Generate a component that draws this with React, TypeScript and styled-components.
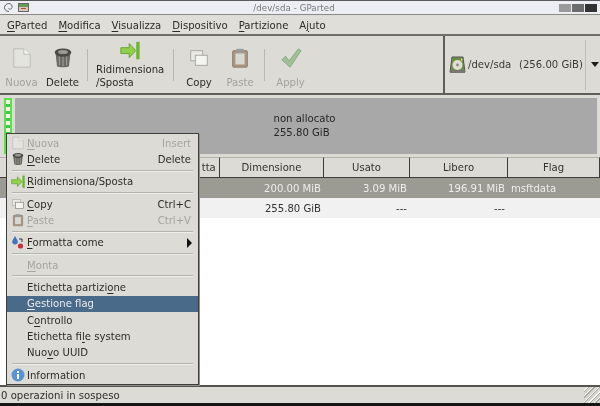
import React from "react";
import styled, { createGlobalStyle } from "styled-components";

const Global = createGlobalStyle`
  html, body { margin: 0; padding: 0; background: #dcdbd5; }
  *, *::before, *::after { box-sizing: border-box; }
  body { width: 600px; height: 406px; overflow: hidden; font-family: "DejaVu Sans", sans-serif; font-size: 10.1px; color: #2b2b2b; }
  svg { display: block; flex: none; }
`;

const Win = styled.div`
  position: relative; width: 600px; height: 406px; display: flex; flex-direction: column;
  background: #dcdbd5; overflow: hidden; white-space: nowrap; filter: blur(.3px);
`;
const TitleBar = styled.div`
  height: 15px; flex: none; border-top: 1px solid #5a5a5a; border-bottom: 1px solid #8a8a86;
  background: #eceef4; display: flex; align-items: center; padding: 0 3px; gap: 4px;
`;
const TitleText = styled.div`
  flex: 1; text-align: center; font-size: 8.6px; color: #77777a; letter-spacing: .1px;
`;
const WinBtns = styled.div` display: flex; gap: 1px; `;
const WinBtn = styled.span<{ $c: string }>`
  width: 12px; height: 8px; background: ${p => p.$c}; display: block;
`;
const MenuBar = styled.div`
  height: 20px; flex: none; display: flex; align-items: center; padding: 0 0 0 7px; gap: 11px;
  border-bottom: 2px solid #6e6e6a; background: #dfded8; margin-top: 1px;
`;
const U = styled.span` text-decoration: underline; text-underline-offset: 1.5px; text-decoration-thickness: 1px; `;

const ToolRow = styled.div`
  height: 59px; flex: none; display: flex; border-bottom: 2px solid #5e5e5a; background: #dcdbd5;
`;
const Tools = styled.div`
  flex: 1; display: flex; align-items: stretch; padding: 0 0 0 5px;
`;
const Tool = styled.div<{ $w: number; $off?: boolean }>`
  width: ${p => p.$w}px; display: flex; flex-direction: column; align-items: center; justify-content: flex-end;
  padding-bottom: 4px; gap: 8px; color: ${p => (p.$off ? "#a3a39e" : "#2b2b2b")}; flex: none; line-height: 12px;
`;
const WideTool = styled.div`
  width: 76px; flex: none; display: flex; flex-direction: column; align-items: center; padding-top: 5px; gap: 1.5px;
`;
const WideLabel = styled.div` line-height: 13px; width: 68px; `;
const ToolSep = styled.div<{ $l: number; $r: number }>`
  width: 1px; background: #b9b8b2; margin: 13px ${p => p.$r}px 12px ${p => p.$l}px; flex: none;
`;
const DeviceBox = styled.div`
  width: 157px; flex: none; border-left: 2px solid #5e5e5a; display: flex; align-items: center; padding-left: 4px; gap: 2px;
  color: #3a3a3a;
`;
const DevName = styled.span` width: 49px; flex: none; `;
const DevSize = styled.span` width: 64px; flex: none; `;
const DevSep = styled.span` width: 1px; height: 50px; background: #bdbcb6; flex: none; `;
const Arrow = styled.span`
  width: 0; height: 0; border-left: 4px solid transparent; border-right: 4px solid transparent;
  border-top: 5px solid #1d1d1d; margin-left: 3px;
`;

const Graph = styled.div`
  height: 62px; flex: none; padding: 3px 3px 3px 4px; display: flex; gap: 3px; background: #dcdbd5;
`;
const PartSlim = styled.div`
  width: 8px; flex: none; border: 2px solid #5ee04a; background: repeating-linear-gradient(to bottom, #eef7e0 0 4px, #3fc94a 4px 7px);
`;
const Unalloc = styled.div`
  flex: 1; background: #a8a8a8; display: flex; flex-direction: column; align-items: center; justify-content: center;
  line-height: 14px; color: #262626; padding-right: 6px;
`;
const UnallocInner = styled.div` width: 59px; `;

const Table = styled.div`
  flex: 1; background: #fff; display: flex; flex-direction: column; min-height: 0;
`;
const Row = styled.div`
  display: grid; grid-template-columns: 220px 104px 86px 98px 92px;
`;
const HeadCell = styled.div<{ $end?: boolean }>`
  height: 21px; display: flex; align-items: center; justify-content: ${p => (p.$end ? "flex-end" : "center")};
  background: #dcdbd5; border-right: 1px solid #3d3d3d; border-bottom: 1px solid #3d3d3d; border-top: 1px solid #b2b1ab;
  color: #333;
`;
const DataRow = styled(Row)<{ $sel?: boolean }>`
  height: 20px; align-items: center; background: ${p => (p.$sel ? "#9b9a93" : "#f1f1f1")};
  color: ${p => (p.$sel ? "#eeeee8" : "#333")};
`;
const Num = styled.div` text-align: right; padding-right: 3px; `;
const Flag = styled.div` padding-left: 3px; `;

const Status = styled.div`
  height: 18px; flex: none; border-top: 2px solid #55554f; background: #dcdbd5; display: flex; align-items: center;
  padding-left: 1px; color: #2e2e2e; position: relative;
`;
const Grip = styled.div`
  position: absolute; right: 0; top: 0; bottom: 0; width: 16px;
  background: repeating-linear-gradient(135deg, #d5d4ce 0 2px, #f4f4f0 2px 3px, #a9a8a2 3px 4px);
`;
const BottomEdge = styled.div` height: 3px; background: #161616; flex: none; `;

const Menu = styled.div`
  position: absolute; left: 6px; top: 133px; width: 193px; height: 252px; background: #dcdbd5;
  border: 1px solid #3e3e3c; box-shadow: 1px 1px 0 #8f8e8a; padding: 1px 0 0; display: flex; flex-direction: column;
  color: #2c2c2c;
`;
const Item = styled.div<{ $off?: boolean; $hi?: boolean }>`
  height: 16.4px; flex: none; display: flex; align-items: center; padding: 0 7px 0 20px; position: relative;
  color: ${p => (p.$hi ? "#e9edf0" : p.$off ? "#a5a5a0" : "#2c2c2c")};
  background: ${p => (p.$hi ? "#4a6a8a" : "transparent")};
`;
const ItemIcon = styled.span` position: absolute; left: 4px; top: 1px; width: 14px; height: 14px; display: block; `;
const Short = styled.span` margin-left: auto; `;
const Sub = styled.span`
  margin-left: auto; margin-right: -1px; width: 0; height: 0; border-top: 5px solid transparent; border-bottom: 5px solid transparent; border-left: 5px solid #111;
`;
const Sep = styled.div`
  height: 2px; flex: none; background: #b4b3ad; border-bottom: 1px solid #eeeeea; margin: 1.95px 5px;
`;

const Page = ({ s = 22 }: { s?: number }) => (
  <svg width={s} height={s} viewBox="0 0 24 24">
    <path d="M3 2h11l7 6v14H3z" fill="#e4e4df" stroke="#b9b9b4" />
    <path d="M14 2v6h7" fill="#f2f2ee" stroke="#bcbcb7" />
  </svg>
);
const Trash = ({ s = 22 }: { s?: number }) => (
  <svg width={s} height={s} viewBox="0 0 24 24">
    <path d="M4 8l1.5 13c1 1.6 12 1.6 13 0L20 8z" fill="#6a6a63" />
    <path d="M8 10v10M12 10v11M16 10v10" stroke="#a8a8a0" />
    <ellipse cx="12" cy="6" rx="9" ry="4.500" fill="#4a4a45" />
    <ellipse cx="12" cy="5.500" rx="5.500" ry="2.200" fill="#9a9a92" />
  </svg>
);
const Resize = ({ s = 20 }: { s?: number }) => (
  <svg width={s} height={s} viewBox="0 0 24 24">
    <path d="M1 8h10V3l8 8.500-8 8.500v-5H1z" fill="#8fd14a" stroke="#5e9b2a" />
    <rect x="19.500" y="1" width="4" height="21" fill="#6cb52f" />
  </svg>
);
const Copy = ({ s = 22, off = false }: { s?: number; off?: boolean }) => (
  <svg width={s} height={s} viewBox="0 0 24 24">
    <rect x="3" y="4" width="13" height="11" fill="#e9e9e5" stroke="#a8a8a3" />
    <rect x="8" y="9" width="13" height="11" fill="#f4f4f0" stroke={off ? "#a4a49f" : "#77776f"} />
  </svg>
);
const Paste = ({ s = 22 }: { s?: number }) => (
  <svg width={s} height={s} viewBox="0 0 24 24">
    <rect x="4" y="4" width="16" height="18" rx="1" fill="#a89684" stroke="#8a7a6a" />
    <rect x="8" y="2" width="8" height="4" fill="#9a9a96" />
    <rect x="7" y="7" width="10" height="12" fill="#d8d8d2" />
  </svg>
);
const Check = () => (
  <svg width={22} height={22} viewBox="0 0 24 24">
    <path d="M2 14l4-4 4 5L20 2l3 2-12 18z" fill="#9fbf94" stroke="#8aa882" />
  </svg>
);
const Disk = () => (
  <svg width={17} height={18} viewBox="0 0 17 18">
    <path d="M3 1h11l2 15H1z" fill="#6c8f46" stroke="#555" />
    <path d="M1 14h15v3H1z" fill="#77776f" />
    <circle cx="8.500" cy="9" r="5" fill="#dedfd0" />
    <circle cx="8.500" cy="9" r="1.400" fill="#8c8c84" />
    <path d="M12 2l2 2-2 1z" fill="#f0e070" />
  </svg>
);
const Format = () => (
  <svg width={14} height={14} viewBox="0 0 14 14">
    <path d="M4 0l2.500 4.500a2.800 2.800 0 1 1-5 0z" fill="#3f74b8" />
    <circle cx="9.500" cy="10" r="2.600" fill="#c8303a" />
    <path d="M8 3h3v3" stroke="#333" fill="none" />
  </svg>
);
const Info = () => (
  <svg width={14} height={14} viewBox="0 0 14 14">
    <circle cx="7" cy="7" r="6.500" fill="#5a92d6" />
    <rect x="6" y="6" width="2" height="5" fill="#fff" />
    <rect x="6" y="3" width="2" height="2" fill="#fff" />
  </svg>
);

export default function App() {
  return (
    <Win>
      <Global />
      <TitleBar>
        <svg width={11} height={11} viewBox="0 0 11 11"><path d="M6 9.500C3 9.500 1.500 7.500 1.500 5.500S3.500 1.500 5.800 1.500 9.500 3.500 9 5.500 6.500 7.500 5.500 6.500" fill="none" stroke="#666" /></svg>
        <svg width={11} height={9} viewBox="0 0 11 9"><rect width="11" height="9" fill="#666" /><rect x="1" y="1" width="9" height="3" fill="#6a9a58" /><rect x="1" y="4" width="9" height="4" fill="#d9c9b8" /><rect x="3" y="5" width="5" height="1" fill="#b04a3a" /></svg>
        <TitleText>/dev/sda - GParted</TitleText>
        <WinBtns><WinBtn $c="#9a9a9a" /><WinBtn $c="#6c6c6c" /><WinBtn $c="#333" /></WinBtns>
      </TitleBar>
      <MenuBar>
        <span><U>G</U>Parted</span>
        <span><U>M</U>odifica</span>
        <span><U>V</U>isualizza</span>
        <span><U>D</U>ispositivo</span>
        <span><U>P</U>artizione</span>
        <span>A<U>j</U>uto</span>
      </MenuBar>
      <ToolRow>
        <Tools>
          <Tool $w={33} $off><Page />Nuova</Tool>
          <Tool $w={49}><Trash />Delete</Tool>
          <ToolSep $l={0} $r={4} />
          <WideTool>
            <Resize />
            <WideLabel>Ridimensiona<br />/Sposta</WideLabel>
          </WideTool>
          <ToolSep $l={5} $r={0} />
          <Tool $w={50}><Copy off />Copy</Tool>
          <Tool $w={32} $off><Paste />Paste</Tool>
          <ToolSep $l={8} $r={0} />
          <Tool $w={51} $off><Check />Apply</Tool>
        </Tools>
        <DeviceBox>
          <Disk />
          <DevName>/dev/sda</DevName>
          <DevSize>(256.00 GiB)</DevSize>
          <DevSep />
          <Arrow />
        </DeviceBox>
      </ToolRow>
      <Graph>
        <PartSlim />
        <Unalloc><UnallocInner>non allocato<br />255.80 GiB</UnallocInner></Unalloc>
      </Graph>
      <Table>
        <Row>
          <HeadCell $end>tta&nbsp;</HeadCell>
          <HeadCell>Dimensione</HeadCell>
          <HeadCell>Usato</HeadCell>
          <HeadCell>Libero</HeadCell>
          <HeadCell>Flag</HeadCell>
        </Row>
        <DataRow $sel>
          <span />
          <Num>200.00 MiB</Num>
          <Num>3.09 MiB</Num>
          <Num>196.91 MiB</Num>
          <Flag>msftdata</Flag>
        </DataRow>
        <DataRow>
          <span />
          <Num>255.80 GiB</Num>
          <Num>---</Num>
          <Num>---</Num>
          <Flag />
        </DataRow>
      </Table>
      <Status>
        0 operazioni in sospeso
        <Grip />
      </Status>
      <BottomEdge />
      <Menu>
        <Item $off><ItemIcon><Page s={14} /></ItemIcon><span><U>N</U>uova</span><Short>Insert</Short></Item>
        <Item><ItemIcon><Trash s={14} /></ItemIcon><span><U>D</U>elete</span><Short>Delete</Short></Item>
        <Sep />
        <Item><ItemIcon><Resize s={14} /></ItemIcon><span><U>R</U>idimensiona/Sposta</span></Item>
        <Sep />
        <Item><ItemIcon><Copy s={14} /></ItemIcon><span><U>C</U>opy</span><Short>Ctrl+C</Short></Item>
        <Item $off><ItemIcon><Paste s={14} /></ItemIcon><span><U>P</U>aste</span><Short>Ctrl+V</Short></Item>
        <Sep />
        <Item><ItemIcon><Format /></ItemIcon><span><U>F</U>ormatta come</span><Sub /></Item>
        <Sep />
        <Item $off><span><U>M</U>onta</span></Item>
        <Sep />
        <Item><span>Etichetta partizi<U>o</U>ne</span></Item>
        <Item $hi><span><U>G</U>estione flag</span></Item>
        <Item><span>C<U>o</U>ntrollo</span></Item>
        <Item><span>Etichetta fi<U>l</U>e system</span></Item>
        <Item><span>Nuo<U>v</U>o UUID</span></Item>
        <Sep />
        <Item><ItemIcon><Info /></ItemIcon>Information</Item>
      </Menu>
    </Win>
  );
}
